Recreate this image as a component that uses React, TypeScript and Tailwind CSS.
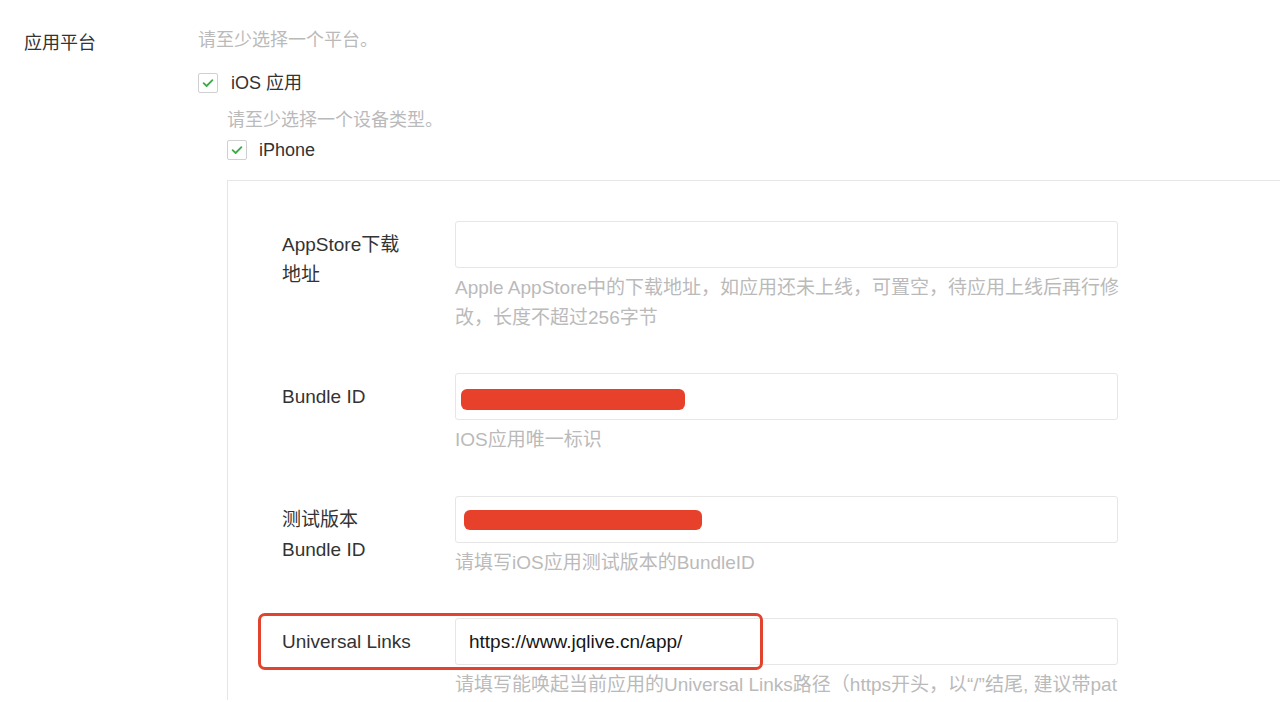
import React from "react";

function Check() {
  return (
    <span className="flex h-[20px] w-[20px] shrink-0 items-center justify-center rounded-[2px] border border-[#d0d0d0] bg-white">
      <svg width="14" height="14" viewBox="0 0 14 14" fill="none">
        <path d="M2.6 7.2 L5.6 10 L11.4 4.2" stroke="#3daa46" strokeWidth="1.8" strokeLinecap="round" strokeLinejoin="round" />
      </svg>
    </span>
  );
}

function Row({
  label,
  hint,
  children,
  gap,
  extra,
}: {
  label: React.ReactNode;
  hint: React.ReactNode;
  children?: React.ReactNode;
  gap: string;
  extra?: React.ReactNode;
}) {
  return (
    <div className={"relative flex " + gap}>
      <div className="w-[173px] shrink-0 pt-[9px] text-[19px] leading-[30px] text-[#333333]">{label}</div>
      <div className="w-[663px] shrink-0">
        <div className="relative h-[47px] rounded-[3px] border border-[#e6e6e6] bg-white">{children}</div>
        <div className="mt-[5px] whitespace-nowrap text-[19px] leading-[30px] text-[#bababa]">{hint}</div>
      </div>
      {extra}
    </div>
  );
}

export default function App() {
  return (
    <div className="h-[702px] w-[1280px] overflow-hidden bg-white font-['Liberation_Sans','Noto_Sans_CJK_SC',sans-serif]">
      <div className="flex pt-[28px]">
        <div className="w-[198px] shrink-0 pl-[24px] pt-[3px] text-[18px] leading-[24px] text-[#333333]">应用平台</div>
        <div className="flex-1">
          <div className="text-[18px] leading-[24px] text-[#bababa]">请至少选择一个平台。</div>
          <div className="mt-[19px] flex h-[24px] items-center gap-[13px]">
            <Check />
            <span className="text-[18px] text-[#333333]">iOS 应用</span>
          </div>
          <div className="pl-[29px]">
            <div className="mt-[13px] text-[18px] leading-[24px] text-[#bababa]">请至少选择一个设备类型。</div>
            <div className="mt-[6px] flex h-[24px] items-center gap-[12px]">
              <Check />
              <span className="text-[18px] text-[#333333]">iPhone</span>
            </div>
            <div className="mt-[18px] border-l border-t border-[#e6e6e6] bg-white pl-[54px] pt-[40px]">
              <Row
                gap="mb-[40px]"
                label={
                  <>
                    AppStore下载
                    <br />
                    地址
                  </>
                }
                hint={
                  <>
                    Apple AppStore中的下载地址，如应用还未上线，可置空，待应用上线后再行修
                    <br />
                    改，长度不超过256字节
                  </>
                }
              />
              <Row gap="mb-[41px]" label="Bundle ID" hint="IOS应用唯一标识">
                <div className="absolute left-[5px] top-[15px] h-[21px] w-[224px] rounded-[6px] bg-[#e8412b]" />
              </Row>
              <Row
                gap="mb-[40px]"
                label={
                  <>
                    测试版本
                    <br />
                    Bundle ID
                  </>
                }
                hint="请填写iOS应用测试版本的BundleID"
              >
                <div className="absolute left-[8px] top-[13px] h-[20px] w-[238px] rounded-[6px] bg-[#e8412b]" />
              </Row>
              <Row
                gap=""
                label="Universal Links"
                hint="请填写能唤起当前应用的Universal Links路径（https开头，以“/”结尾, 建议带pat"
                extra={
                  <div className="pointer-events-none absolute left-[-24px] top-[-5px] h-[57px] w-[505px] rounded-[7px] border-[3px] border-[#e2432f]" />
                }
              >
                <div className="pl-[13px] text-[19px] leading-[45px] text-[#161616]">https://www.jqlive.cn/app/</div>
              </Row>
            </div>
          </div>
        </div>
      </div>
    </div>
  );
}
